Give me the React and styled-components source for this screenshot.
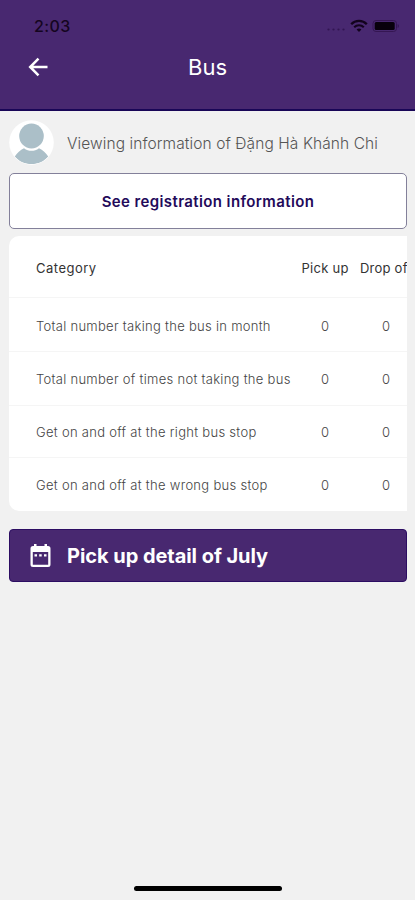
import React from "react";
import styled, { createGlobalStyle } from "styled-components";

const Global = createGlobalStyle`
  * { box-sizing: border-box; }
  body { margin: 0; background: #f1f1f1; }
`;

const Screen = styled.div`
  width: 415px;
  height: 900px;
  display: flex;
  flex-direction: column;
  background: #f1f1f1;
  font-family: Inter, "Liberation Sans", sans-serif;
  overflow: hidden;
`;

const Header = styled.header`
  height: 111px;
  flex: none;
  background: #482870;
  border-bottom: 2px solid #190657;
`;

const StatusBar = styled.div`
  height: 50px;
  padding: 2px 15px 0 34px;
  display: flex;
  align-items: center;
  justify-content: space-between;
  color: #15051f;
`;

const Clock = styled.span`
  font-size: 16px;
  font-weight: 500;
  letter-spacing: 0.4px;
`;

const StatusIcons = styled.div`
  display: flex;
  align-items: center;
`;

const NavBar = styled.div`
  height: 34px;
  display: grid;
  grid-template-columns: 76px 1fr 76px;
  align-items: center;
  justify-items: center;
`;

const BackButton = styled.button`
  display: flex;
  padding: 0;
  border: 0;
  background: none;
  color: #fff;
`;

const Title = styled.h1`
  margin: 0;
  font-size: 22px;
  line-height: 32px;
  font-weight: 400;
  color: #fff;
`;

const Content = styled.main`
  flex: 1;
  padding: 9px 9px 0;
`;

const Profile = styled.div`
  height: 45px;
  display: flex;
  align-items: center;
  gap: 13px;
`;

const Viewing = styled.span`
  padding-top: 1px;
  font-size: 15.5px;
  font-weight: 300;
  letter-spacing: 0.09px;
  color: #555;
  white-space: nowrap;
`;

const RegistrationButton = styled.button`
  display: block;
  width: 398px;
  height: 56px;
  margin-top: 8px;
  padding: 0;
  border: 1px solid #83809a;
  border-radius: 5px;
  background: #fff;
  font-family: inherit;
  font-size: 15px;
  font-weight: 600;
  letter-spacing: 0.39px;
  color: #230a5a;
`;

const TableCard = styled.div`
  width: 398px;
  height: 275px;
  margin-top: 7px;
  border-radius: 10px 0 0 10px;
  background: #fff;
  overflow: hidden;
`;

const Row = styled.div`
  width: 420px;
  height: ${(p) => p.$height}px;
  padding: ${(p) => p.$inset}px 0 0 27px;
  display: grid;
  grid-template-columns: 258.600px 61px 61px;
  align-items: center;
  border-bottom: ${(p) => (p.$last ? "0" : "1px solid #f5f5f5")};
  font-size: 13px;
  font-weight: ${(p) => (p.$head ? 400 : 300)};
  letter-spacing: ${(p) => (p.$head ? 0.25 : 0.29)}px;
  color: ${(p) => (p.$head ? "#333" : "#444")};
`;

const Label = styled.span`
  white-space: nowrap;
  letter-spacing: ${(p) => (p.$head ? "0.5px" : "inherit")};
`;

const Value = styled.span`
  text-align: center;
  white-space: nowrap;
`;

const DetailButton = styled.button`
  width: 398px;
  height: 53px;
  margin-top: 18px;
  padding: 0 19px;
  display: flex;
  align-items: center;
  gap: 15px;
  border: 1px solid #2c0d62;
  border-radius: 4px;
  background: #482870;
  color: #fff;
  font-family: inherit;
  font-size: 20px;
  font-weight: 700;
  letter-spacing: -0.05px;
`;

const HomeArea = styled.footer`
  height: 15px;
  display: flex;
  justify-content: center;
`;

const HomeIndicator = styled.div`
  width: 148px;
  height: 5px;
  margin: 1px 0 0 1px;
  border-radius: 3px;
  background: #000;
`;

const SignalIcon = () => (
  <svg width="20" height="12" viewBox="0 0 20 12" fill="#321552">
    <circle cx="2.5" cy="9.5" r="1.1" />
    <circle cx="7.5" cy="9.5" r="1.1" />
    <circle cx="12.5" cy="9.5" r="1.1" />
    <circle cx="17.5" cy="9.5" r="1.1" />
  </svg>
);

const WifiIcon = () => (
  <svg width="26" height="14" viewBox="0 0 26 14" fill="none" stroke="#12031d">
    <path d="M5.2 5.3C9.4.8 16.6.8 20.8 5.3" strokeWidth="2.3" />
    <path d="M8.2 8.3c2.6-2.8 7-2.8 9.6 0" strokeWidth="2" />
    <path d="M13 13l-2.4-2.6c1.3-1.2 3.5-1.2 4.8 0z" fill="#12031d" stroke="none" />
  </svg>
);

const BatteryIcon = () => (
  <svg width="28" height="14" viewBox="0 0 28 14">
    <rect x="1" y="1.5" width="23.5" height="11" rx="3" fill="none" stroke="#351653" />
    <rect x="2.7" y="3" width="20" height="8" rx="1.5" fill="#08000c" />
    <path d="M25.7 5v4c1.6-.6 1.6-3.4 0-4z" fill="#321552" />
  </svg>
);

const BackIcon = () => (
  <svg width="20" height="20" viewBox="0 0 20 20" fill="none" stroke="currentColor" strokeWidth="2.5">
    <path d="M19.5 10H2.5M10.5 1.7L2.2 10l8.3 8.3" />
  </svg>
);

const Avatar = () => (
  <svg width="45" height="45" viewBox="0 0 45 45">
    <defs>
      <clipPath id="face"><circle cx="22.5" cy="22.5" r="22" /></clipPath>
    </defs>
    <circle cx="22.5" cy="22.5" r="22.3" fill="#fff" />
    <g fill="#abbfc8" clipPath="url(#face)">
      <ellipse cx="22.5" cy="16" rx="12.3" ry="12.5" />
      <path d="M5.8 36.5c2.3-3.6 5.4-6.5 9.2-8.3 4.6 3.5 10.4 3.5 15 0 3.8 1.8 7 4.7 9.2 8.3C35 41.7 29.2 44 22.5 44S10 41.7 5.8 36.5z" />
    </g>
  </svg>
);

const CalendarIcon = () => (
  <svg width="23" height="25" viewBox="0 0 23 25">
    <path
      d="M4 3h1V1h2.5v2h8V1H18v2h1a2.5 2.5 0 0 1 2.5 2.5v16A2.5 2.5 0 0 1 19 24H4a2.5 2.5 0 0 1-2.5-2.5v-16A2.5 2.5 0 0 1 4 3zM3.8 9v12.700h15.400V9z"
      fill="#fff"
      fillRule="evenodd"
    />
    <path d="M5.5 11.2H8v2.3H5.5zM10.2 11.2h2.5v2.3h-2.5zM15 11.2h2.5v2.3H15z" fill="#fff" />
  </svg>
);

const rows = [
  { label: "Total number taking the bus in month", pickUp: 0, dropOff: 0, height: 54, inset: 2 },
  { label: "Total number of times not taking the bus", pickUp: 0, dropOff: 0, height: 54, inset: 0 },
  { label: "Get on and off at the right bus stop", pickUp: 0, dropOff: 0, height: 52, inset: 0 },
  { label: "Get on and off at the wrong bus stop", pickUp: 0, dropOff: 0, height: 53, inset: 0 },
];

export default function App() {
  return (
    <>
      <Global />
      <Screen>
        <Header>
          <StatusBar>
            <Clock>2:03</Clock>
            <StatusIcons>
              <SignalIcon />
              <WifiIcon />
              <BatteryIcon />
            </StatusIcons>
          </StatusBar>
          <NavBar>
            <BackButton aria-label="Back"><BackIcon /></BackButton>
            <Title>Bus</Title>
          </NavBar>
        </Header>
        <Content>
          <Profile>
            <Avatar />
            <Viewing>Viewing information of Đặng Hà Khánh Chi</Viewing>
          </Profile>
          <RegistrationButton>See registration information</RegistrationButton>
          <TableCard>
            <Row $head $height={62} $inset={2}>
              <Label $head>Category</Label>
              <Value>Pick up</Value>
              <Value>Drop off</Value>
            </Row>
            {rows.map((row, i) => (
              <Row
                key={row.label}
                $height={row.height}
                $inset={row.inset}
                $last={i === rows.length - 1}
              >
                <Label>{row.label}</Label>
                <Value>{row.pickUp}</Value>
                <Value>{row.dropOff}</Value>
              </Row>
            ))}
          </TableCard>
          <DetailButton>
            <CalendarIcon />
            <span>Pick up detail of July</span>
          </DetailButton>
        </Content>
        <HomeArea><HomeIndicator /></HomeArea>
      </Screen>
    </>
  );
}
